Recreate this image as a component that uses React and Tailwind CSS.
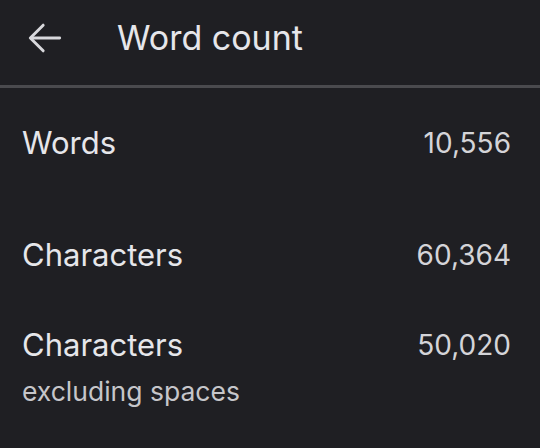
export default function App() {
  const rows = [
    { label: "Words", value: "10,556", h: "h-[112px]" },
    { label: "Characters", value: "60,364", h: "h-[90px]" },
    { label: "Characters", sub: "excluding spaces", value: "50,020", h: "h-[110px]" },
  ];
  return (
    <div className="w-[540px] h-[448px] bg-[#1f1f23] text-[#e6e6ea] font-['Inter',sans-serif] overflow-hidden">
      <header className="h-[85px] flex items-center">
        <div className="w-[90px] flex justify-center -mt-[9px]">
          <svg width="44" height="44" viewBox="0 0 24 24" fill="none" stroke="#d8d8dc" strokeWidth="1.6" strokeLinecap="round">
            <path d="M20 12H4.5" />
            <path d="M11 5l-7 7 7 7" strokeLinejoin="round" />
          </svg>
        </div>
        <h1 className="ml-[27px] text-[34px] leading-none -mt-[10px]">Word count</h1>
      </header>
      <div className="h-[3px] bg-[#4a4a4e]" />
      <div className="pl-[22px] pr-[29px] pt-[39px]">
        {rows.map((r, i) => (
          <div key={i} className={`flex justify-between ${r.h}`}>
            <div>
              <div className="text-[31px] leading-none">{r.label}</div>
              {r.sub && <div className="text-[26.5px] leading-none mt-[18px] text-[#c6c6ca]">{r.sub}</div>}
            </div>
            <div className="text-[28px] leading-none text-[#d4d4d8] mt-[2px]">{r.value}</div>
          </div>
        ))}
      </div>
    </div>
  );
}
